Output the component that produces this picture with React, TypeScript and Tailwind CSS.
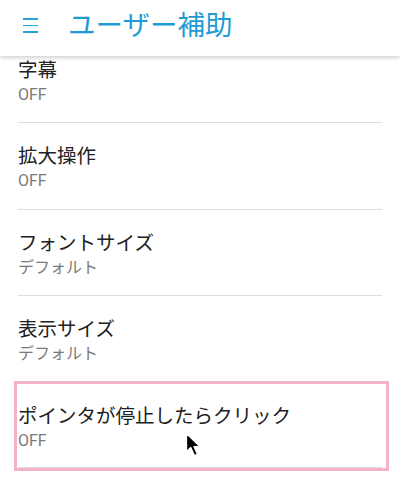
import React from 'react';

type Setting = { title: string; value: string; highlighted?: boolean };

const settings: Setting[] = [
  { title: '字幕', value: 'OFF' },
  { title: '拡大操作', value: 'OFF' },
  { title: 'フォントサイズ', value: 'デフォルト' },
  { title: '表示サイズ', value: 'デフォルト' },
  { title: 'ポインタが停止したらクリック', value: 'OFF', highlighted: true },
];

const font = { fontFamily: 'Roboto, "Noto Sans CJK JP", sans-serif' };

const PointerCursor = () => (
  <svg width="18" height="26" viewBox="0 0 18 26">
    <path
      d="M1.5 1.5 L1.5 19.5 L5.8 15.6 L9.4 23.6 L12.4 22.3 L9 14.6 L14.6 14.4 Z"
      fill="#000"
      stroke="#fff"
      strokeWidth="1.3"
      strokeLinejoin="round"
    />
  </svg>
);

export default function App() {
  return (
    <div className="relative h-[477px] w-[400px] overflow-hidden bg-white" style={font}>
      {/* App bar */}
      <header className="relative z-10 flex h-14 items-center bg-white pb-[5px] shadow-[0_2px_4px_rgba(0,0,0,0.18)]">
        <div className="ml-[23px] flex w-[15px] flex-col gap-[5px]">
          <span className="h-[1.5px] w-full bg-[#2aa3d8]" />
          <span className="h-[1.5px] w-full bg-[#2aa3d8]" />
          <span className="h-[1.5px] w-full bg-[#2aa3d8]" />
        </div>
        <h1 className="ml-[30px] text-[27.5px] leading-none text-[#1e9bd4]">ユーザー補助</h1>
      </header>

      {/* List, scrolled a little under the bar */}
      <div className="mx-[18px] -mt-[20.5px]">
        {settings.map((s) => (
          <div
            key={s.title}
            className={`relative h-[86.5px] border-t border-[#dcdcdc] pt-[22px] ${s.highlighted ? 'border-b' : ''}`}
          >
            <div className="text-[19.5px] leading-6 text-[#212121]">{s.title}</div>
            <div className="mt-[2px] text-[16px] leading-5 text-[#7a7a7a]">{s.value}</div>
            {s.highlighted && (
              <div className="pointer-events-none absolute -top-[2px] -left-[4px] -right-[7px] -bottom-[4px] border-[3px] border-[#f4b1ca]" />
            )}
          </div>
        ))}
      </div>

      {/* Mouse pointer */}
      <div className="absolute left-[185px] top-[432px]">
        <PointerCursor />
      </div>
    </div>
  );
}
